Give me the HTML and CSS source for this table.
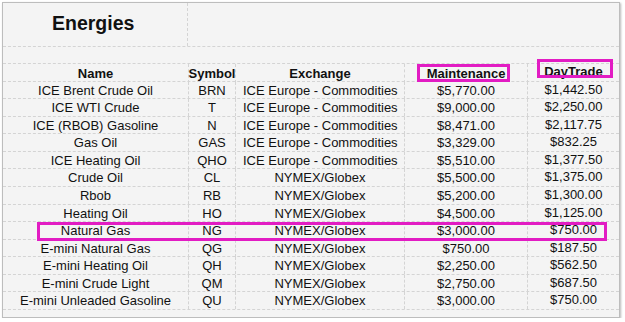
FILE: index.html
```html
<!DOCTYPE html>
<html>
<head>
<meta charset="utf-8">
<link rel="stylesheet" href="styles.css">
</head>
<body>
<div class="frame">
  <div class="sheet">
    <div class="title-row">
      <div class="title-cell">Energies</div>
      <div class="title-rest"></div>
    </div>
    <div class="blank-row"></div>
    <div class="row head">
      <div>Name</div><div>Symbol</div><div>Exchange</div><div>Maintenance</div><div class="day">DayTrade</div>
    </div>
    <div class="row"><div>ICE Brent Crude Oil</div><div>BRN</div><div class="left">ICE Europe - Commodities</div><div>$5,770.00</div><div class="day">$1,442.50</div></div>
    <div class="row"><div>ICE WTI Crude</div><div>T</div><div class="left">ICE Europe - Commodities</div><div>$9,000.00</div><div class="day">$2,250.00</div></div>
    <div class="row"><div>ICE (RBOB) Gasoline</div><div>N</div><div class="left">ICE Europe - Commodities</div><div>$8,471.00</div><div class="day">$2,117.75</div></div>
    <div class="row"><div>Gas Oil</div><div>GAS</div><div class="left">ICE Europe - Commodities</div><div>$3,329.00</div><div class="day">$832.25</div></div>
    <div class="row"><div>ICE Heating Oil</div><div>QHO</div><div class="left">ICE Europe - Commodities</div><div>$5,510.00</div><div class="day">$1,377.50</div></div>
    <div class="row"><div>Crude Oil</div><div>CL</div><div>NYMEX/Globex</div><div>$5,500.00</div><div class="day">$1,375.00</div></div>
    <div class="row"><div>Rbob</div><div>RB</div><div>NYMEX/Globex</div><div>$5,200.00</div><div class="day">$1,300.00</div></div>
    <div class="row"><div>Heating Oil</div><div>HO</div><div>NYMEX/Globex</div><div>$4,500.00</div><div class="day">$1,125.00</div></div>
    <div class="row"><div>Natural Gas</div><div>NG</div><div>NYMEX/Globex</div><div>$3,000.00</div><div class="day">$750.00</div></div>
    <div class="row"><div>E-mini Natural Gas</div><div>QG</div><div>NYMEX/Globex</div><div>$750.00</div><div class="day">$187.50</div></div>
    <div class="row"><div>E-mini Heating Oil</div><div>QH</div><div>NYMEX/Globex</div><div>$2,250.00</div><div class="day">$562.50</div></div>
    <div class="row"><div>E-mini Crude Light</div><div>QM</div><div>NYMEX/Globex</div><div>$2,750.00</div><div class="day">$687.50</div></div>
    <div class="row"><div>E-mini Unleaded Gasoline</div><div>QU</div><div>NYMEX/Globex</div><div>$3,000.00</div><div class="day">$750.00</div></div>
  </div>
  <div class="mark mark-maint"></div>
  <div class="mark mark-day"></div>
  <div class="mark mark-ng"></div>
</div>
</body>
</html>
```

FILE: styles.css
```css
html, body {
  margin: 0;
  padding: 0;
  background: #ffffff;
}

.frame {
  position: relative;
  margin: 2px 0 0 2px;
  width: 618px;
  height: 316px;
  box-sizing: border-box;
  border: 1px solid #bdbdbd;
  background: #f4f4f4;
  box-shadow: 1px 1px 2px rgba(0, 0, 0, 0.28);
  overflow: hidden;
}

.sheet {
  display: flex;
  flex-direction: column;
  width: 616px;
  font-family: "Liberation Sans", Arial, sans-serif;
  font-size: 13px;
  line-height: 15px;
  color: #111111;
}

.title-row {
  display: grid;
  grid-template-columns: 185px 1fr;
  height: 44px;
  box-sizing: border-box;
  border-bottom: 1px dashed #d4d4d4;
}

.title-cell {
  font-size: 19.5px;
  line-height: 22px;
  font-weight: bold;
  padding: 9px 0 0 49px;
  border-right: 1px dashed #d4d4d4;
}

.blank-row {
  height: 17px;
  box-sizing: border-box;
  border-bottom: 1px dashed #d4d4d4;
}

.row {
  display: grid;
  grid-template-columns: 185px 47px 169px 123px 92px;
  height: 17.57px;
  box-sizing: border-box;
  border-bottom: 1px dashed #d4d4d4;
}

.row > div {
  display: flex;
  align-items: center;
  justify-content: center;
  white-space: nowrap;
  border-left: 1px dashed #d4d4d4;
}

.row > div:first-child {
  border-left: none;
}

.row > div.left {
  justify-content: flex-start;
  padding-left: 7px;
}

.row > div.day {
  padding-bottom: 2px;
}

.head > div {
  font-weight: bold;
}

.head > div.day {
  padding-bottom: 4px;
}

.mark {
  position: absolute;
  box-sizing: border-box;
  border: 3px solid #e21cc3;
}

.mark-maint {
  left: 414px;
  top: 61px;
  width: 93px;
  height: 18px;
}

.mark-day {
  left: 534px;
  top: 56px;
  width: 76px;
  height: 19px;
}

.mark-ng {
  left: 34px;
  top: 219px;
  width: 570px;
  height: 19px;
}
```
